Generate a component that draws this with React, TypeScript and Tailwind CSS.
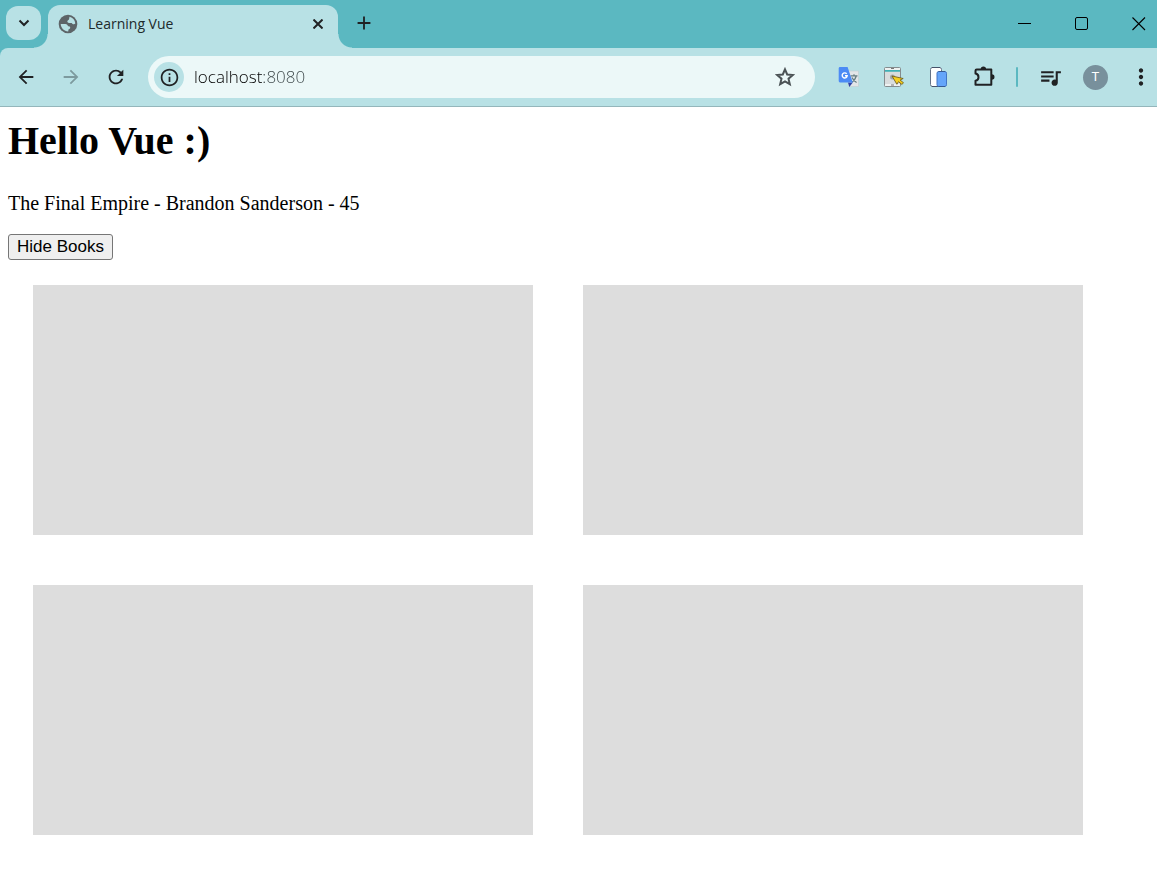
import { useState } from "react";
import {
  MdArrowBack,
  MdArrowForward,
  MdRefresh,
  MdInfoOutline,
  MdMoreVert,
  MdQueueMusic,
  MdAdd,
} from "react-icons/md";

function GlobeIcon() {
  return (
    <svg width="20" height="20" viewBox="0 0 20 20" className="shrink-0" aria-hidden="true">
      <circle cx="10" cy="10" r="9.300" fill="#5d6468" />
      <path
        d="M11.500 2.700c3.500.8 5.700 3.800 5.800 6.800-1 1.200-2.800 1-3.600-.6-2 .2-4.200.2-4.400-1.400-.1-1.300 1.700-1.300 1.800-2.500z"
        fill="#b8e1e5"
      />
      <path
        d="M2.700 10h4.600c1.700 0 2.500 1 2.700 2.300 1.800 0 2.400.6 2.200 1.800-.2.900-1.300 1-1.700 1.400l-.3 1.900C6 17.300 2.900 14 2.700 10z"
        fill="#b8e1e5"
      />
    </svg>
  );
}

function StarIcon() {
  return (
    <svg width="24" height="24" viewBox="0 0 24 24" fill="none" stroke="currentColor" strokeWidth="2" aria-hidden="true">
      <path d="M12 4.300l2.200 5.200 5.600.5-4.300 3.700 1.300 5.500-4.800-2.900-4.800 2.900 1.300-5.500L4.200 10l5.600-.5z" />
    </svg>
  );
}

function TranslateIcon() {
  return (
    <svg width="22" height="22" viewBox="0 0 22 22" aria-hidden="true">
      <path d="M8 5h12.500v15.500H11z" fill="#e3e6e8" stroke="#c3cdd0" strokeWidth=".6" />
      <path d="M12.500 9.800h7M16 8.300v1.500M18.200 10c-.7 3-2.500 5-4.500 6.200M14 11.500c.9 2 2.500 3.900 4.600 5" fill="none" stroke="#647d80" strokeWidth="1.200" />
      <path d="M10 16.500h4.800L11.300 21z" fill="#3044a5" />
      <path d="M2 1h7.600l5.200 15.500H2A1.500 1.500 0 0 1 .7 15V2.300A1.400 1.400 0 0 1 2 1z" fill="#4c8bf5" />
      <path d="M8.700 7.900A2.500 2.500 0 1 0 9.200 9.700H7" fill="none" stroke="#fff" strokeWidth="1.400" />
    </svg>
  );
}

function PageCursorIcon() {
  return (
    <svg width="22" height="22" viewBox="0 0 22 22" aria-hidden="true">
      <rect x="1.500" y="1.500" width="16" height="19" rx="1" fill="#d9dcdd" stroke="#858c8e" />
      <path d="M2 2h15v2H2zM2 18h15v2H2z" fill="#eef1f1" />
      <path d="M2 4h15v1.800H2z" fill="#3fb0b5" />
      <path d="M8 2.500h3M8 19h3" stroke="#777" />
      <circle cx="9.500" cy="11" r="2.500" fill="#a0a5a7" />
      <path d="M9 10l11.200 2.500-3 1.600 3.300 2.700-1.600 1.600-3.400-2.700-1.600 2.600z" fill="#f5cf20" stroke="#665313" strokeWidth=".8" strokeLinejoin="round" />
    </svg>
  );
}

function DevicesIcon() {
  return (
    <svg width="22" height="22" viewBox="0 0 22 22" aria-hidden="true">
      <rect x="2.500" y="1.500" width="11" height="19" rx="2" fill="#fff" stroke="#657286" />
      <path d="M4 1.500h8M4 20.500h8" stroke="#46536a" strokeWidth="1.200" />
      <rect x="9" y="5.500" width="9.500" height="15" rx="1.800" fill="#65a5fa" stroke="#4275c4" />
      <path d="M10.500 5.500h6.500M10.500 20.500h6.500" stroke="#385a91" />
    </svg>
  );
}

function PuzzleIcon() {
  return (
    <svg width="24" height="24" viewBox="0 0 24 24" fill="none" aria-hidden="true">
      <path
        d="M4.700 4.500h14.600v15.300H3.500v-4c4-.8 4-6.400 0-7.200V5.700q0-1.200 1.200-1.200z"
        stroke="#202224"
        strokeWidth="2"
        strokeLinejoin="round"
      />
      <path d="M8.700 4.200a2.700 2.700 0 0 1 5.400 0zM19.800 9.300a2.700 2.700 0 0 1 0 5.400z" fill="#202224" />
    </svg>
  );
}

const toolButton = "flex h-9 w-[45px] shrink-0 items-center justify-center text-[#202224]";
const windowButton = "flex h-12 w-[57px] items-center justify-center text-black";

function TabStrip() {
  return (
    <header className="flex h-12 overflow-hidden bg-[#5bb8c1]">
      <button
        aria-label="Search tabs"
        className="mt-1.5 ml-1.5 flex h-[34px] w-[35px] shrink-0 items-center justify-center rounded-xl bg-[#b8e1e5] text-[#202224]"
      >
        <svg width="12" height="8" fill="none" stroke="currentColor" strokeWidth="2" aria-hidden="true"><path d="M1.500 1.500L6 6l4.500-4.500" /></svg>
      </button>
      <div className="relative mt-[5px] ml-[7px] flex w-[290px] items-center rounded-t-xl bg-[#b8e1e5] pb-1.5 pl-2.5">
        <span className="absolute bottom-0 -left-3.5 size-3.5 bg-[radial-gradient(circle_at_top_left,transparent_13px,#b8e1e5_14px)]" />
        <span className="absolute -right-3.5 bottom-0 size-3.5 bg-[radial-gradient(circle_at_top_right,transparent_13px,#b8e1e5_14px)]" />
        <GlobeIcon />
        <span className="ml-2.5 grow text-[14px] leading-5 text-[#202a2c]">Learning Vue</span>
        <button aria-label="Close tab" className="mr-2.5 flex size-5 items-center justify-center text-[#202224]">
          <svg width="10" height="10" stroke="currentColor" strokeWidth="2" aria-hidden="true"><path d="M.5.5l9 9M9.500.5l-9 9" /></svg>
        </button>
      </div>
      <button aria-label="New tab" className="ml-2.5 flex h-[46px] w-[31px] items-center justify-center text-[#202224]">
        <MdAdd size={22} />
      </button>
      <div className="-mr-2.5 ml-auto flex">
        <button aria-label="Minimize" className={windowButton}>
          <svg width="14" height="14" stroke="currentColor" aria-hidden="true"><path d="M0 6.500h13" /></svg>
        </button>
        <button aria-label="Maximize" className={windowButton}>
          <svg width="14" height="14" fill="none" stroke="currentColor" aria-hidden="true"><rect x=".5" y=".5" width="12" height="12" rx="1.500" /></svg>
        </button>
        <button aria-label="Close" className={windowButton}>
          <svg width="14" height="14" stroke="currentColor" strokeWidth="1.100" aria-hidden="true"><path d="M.5.5l12.500 12.500M13 .5L.5 13" /></svg>
        </button>
      </div>
    </header>
  );
}

function Toolbar() {
  return (
    <div className="bg-[#5bb8c1]">
      <nav className="flex h-[59px] items-center overflow-hidden rounded-tl-lg border-b border-[#94b6bb] bg-[#b8e1e5] pl-[3px]">
        <button aria-label="Back" className={toolButton}><MdArrowBack size={22} /></button>
        <button aria-label="Forward" className={toolButton}><MdArrowForward size={22} className="text-[#7d9a9e]" /></button>
        <button aria-label="Reload" className={toolButton}><MdRefresh size={22} /></button>
        <div className="mr-[11px] ml-2.5 flex h-[42px] grow items-center rounded-full bg-[#ecf8f8] px-1.5">
          <button aria-label="View site information" className="flex size-[30px] shrink-0 items-center justify-center rounded-full bg-[#b8e1e5] text-[#202224]">
            <MdInfoOutline size={21} />
          </button>
          <input
            aria-label="Address"
            defaultValue="localhost:8080"
            className="ml-2.5 min-w-0 grow bg-linear-to-r from-black from-[70px] to-[#3c4749] to-[70px] bg-clip-text text-[17px] leading-6 font-light text-transparent caret-black outline-none"
          />
          <button aria-label="Bookmark this tab" className="mr-1.5 flex size-9 items-center justify-center text-[#4c5356]">
            <StarIcon />
          </button>
        </div>
        <button aria-label="Translate" className={toolButton}><TranslateIcon /></button>
        <button aria-label="Page picker" className={toolButton}><PageCursorIcon /></button>
        <button aria-label="Device preview" className={toolButton}><DevicesIcon /></button>
        <button aria-label="Extensions" className={toolButton}><PuzzleIcon /></button>
        <span className="mx-2.5 h-5 w-0.5 shrink-0 rounded-full bg-[#5bb8c1]" />
        <button aria-label="Media controls" className={toolButton}><MdQueueMusic size={25} /></button>
        <button aria-label="Profile" className={toolButton}>
          <span className="flex size-[25px] items-center justify-center rounded-full bg-[#78909c] font-[Roboto] text-[13px] text-white">T</span>
        </button>
        <button aria-label="Menu" className={toolButton + " -mr-1.5"}><MdMoreVert size={26} /></button>
      </nav>
    </div>
  );
}

export default function App() {
  const [showBooks, setShowBooks] = useState(true);
  return (
    <div className="min-h-screen bg-white">
      <div className="font-['Open_Sans',sans-serif]">
        <TabStrip />
        <Toolbar />
      </div>
      <main className="px-2 pt-[11px] font-['Liberation_Serif',serif] text-black">
        <h1 className="text-[40px] leading-[46px] font-bold">Hello Vue :)</h1>
        <p className="mt-[27px] text-[20px] leading-6">The Final Empire - Brandon Sanderson - 45</p>
        <button
          onClick={() => setShowBooks(!showBooks)}
          className="mt-[19px] block h-[26px] rounded-[3px] border border-[#767676] bg-[#efefef] px-2 font-['Liberation_Sans',sans-serif] text-[17px] leading-5"
        >
          {showBooks ? "Hide Books" : "Show Books"}
        </button>
        {showBooks && (
          <section aria-label="Books" className="flex flex-wrap">
            {[1, 2, 3, 4].map((box) => (
              <div key={box} className="m-[25px] h-[250px] w-[500px] bg-[#dddddd]" />
            ))}
          </section>
        )}
      </main>
    </div>
  );
}
